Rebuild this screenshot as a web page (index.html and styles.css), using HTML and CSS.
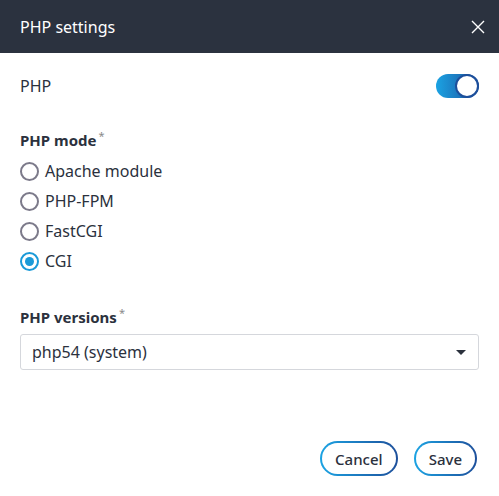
FILE: index.html
```html
<!DOCTYPE html>
<html lang="en">

<head>
    <meta charset="UTF-8">
    <meta name="viewport" content="width=device-width, initial-scale=1.0">
    <title>PHP settings</title>
    <link rel="stylesheet" href="styles.css">
</head>

<body>
    <div class="dialog">
        <div class="dialog-header">
            <h1 class="dialog-title">PHP settings</h1>
            <button class="close-btn" aria-label="Close">
                <svg width="14" height="14" viewBox="0 0 14 14">
                    <path d="M1 1 L13 13 M13 1 L1 13" stroke="#ffffff" stroke-width="1.4" fill="none" />
                </svg>
            </button>
        </div>

        <div class="dialog-body">
            <div class="switch-row">
                <span class="switch-label">PHP</span>
                <span class="toggle"><span class="knob"></span></span>
            </div>

            <div class="field-label">PHP mode<span class="req">*</span></div>
            <div class="radio-list">
                <label class="radio"><span class="dot"></span>Apache module</label>
                <label class="radio"><span class="dot"></span>PHP-FPM</label>
                <label class="radio"><span class="dot"></span>FastCGI</label>
                <label class="radio checked"><span class="dot"></span>CGI</label>
            </div>

            <div class="field-label versions">PHP versions<span class="req">*</span></div>
            <div class="select">
                <span>php54 (system)</span>
                <span class="caret"></span>
            </div>
        </div>

        <div class="dialog-footer">
            <button class="btn">Cancel</button>
            <button class="btn">Save</button>
        </div>
    </div>
</body>

</html>
```

FILE: styles.css
```css
body {
    margin: 0;
    font-family: "Noto Sans", "Open Sans", sans-serif;
    background-color: #fff;
    color: #2b313d;
}

.dialog {
    width: 499px;
    height: 496px;
    display: flex;
    flex-direction: column;
}

.dialog-header {
    height: 53px;
    background-color: #2b323f;
    display: flex;
    align-items: center;
    justify-content: space-between;
    padding: 0 20px;
}

.dialog-title {
    margin: 0;
    font-size: 16px;
    font-weight: 400;
    color: #fff;
}

.close-btn {
    background: none;
    border: none;
    padding: 0;
    margin-right: -6px;
    display: flex;
    cursor: pointer;
}

.dialog-body {
    padding: 21px 20px 0;
    flex: 1;
}

.switch-row {
    display: flex;
    justify-content: space-between;
    align-items: center;
    height: 24px;
}

.switch-label {
    font-size: 16px;
}

.toggle {
    width: 43px;
    height: 24px;
    border-radius: 12px;
    background: linear-gradient(to right, #1ba3e3, #1d4f9b);
    position: relative;
}

.knob {
    position: absolute;
    right: 0;
    top: 0;
    width: 20px;
    height: 20px;
    border-radius: 50%;
    border: 2px solid #1d4f9b;
    background: #fff;
}

.field-label {
    font-size: 15px;
    font-weight: 700;
    margin-top: 31px;
    height: 22px;
    line-height: 22px;
}

.field-label.versions {
    margin-top: 30px;
}

.req {
    font-size: 11px;
    font-weight: 400;
    color: #8a8a8a;
    vertical-align: top;
    line-height: 14px;
    margin-left: 2px;
}

.radio-list {
    display: flex;
    flex-direction: column;
    margin-top: 5px;
}

.radio {
    display: flex;
    align-items: center;
    height: 30px;
    font-size: 16px;
    gap: 6px;
}

.dot {
    width: 15px;
    height: 15px;
    border-radius: 50%;
    border: 2px solid #7c7a8a;
    display: flex;
    align-items: center;
    justify-content: center;
}

.radio.checked .dot {
    border-color: #1a9ad8;
}

.radio.checked .dot::after {
    content: "";
    width: 9px;
    height: 9px;
    border-radius: 50%;
    background: #1a9ad8;
}

.select {
    margin-top: 6px;
    height: 34px;
    border: 1px solid #d5d7dc;
    border-radius: 3px;
    display: flex;
    align-items: center;
    justify-content: space-between;
    padding: 0 12px 0 11px;
    font-size: 16px;
}

.caret {
    width: 0;
    height: 0;
    border-left: 5px solid transparent;
    border-right: 5px solid transparent;
    border-top: 5px solid #2b313d;
}

.dialog-footer {
    display: flex;
    justify-content: flex-end;
    gap: 16px;
    padding: 0 22px 20px 0;
}

.btn {
    height: 35px;
    padding: 0 13px;
    border-radius: 18px;
    border: 2px solid transparent;
    background: linear-gradient(#fff, #fff) padding-box,
        linear-gradient(to right, #1ba3e3, #1d4f9b) border-box;
    font-family: "Noto Sans", "Open Sans", sans-serif;
    font-size: 15px;
    font-weight: 500;
    color: #2b313d;
    cursor: pointer;
}
```
